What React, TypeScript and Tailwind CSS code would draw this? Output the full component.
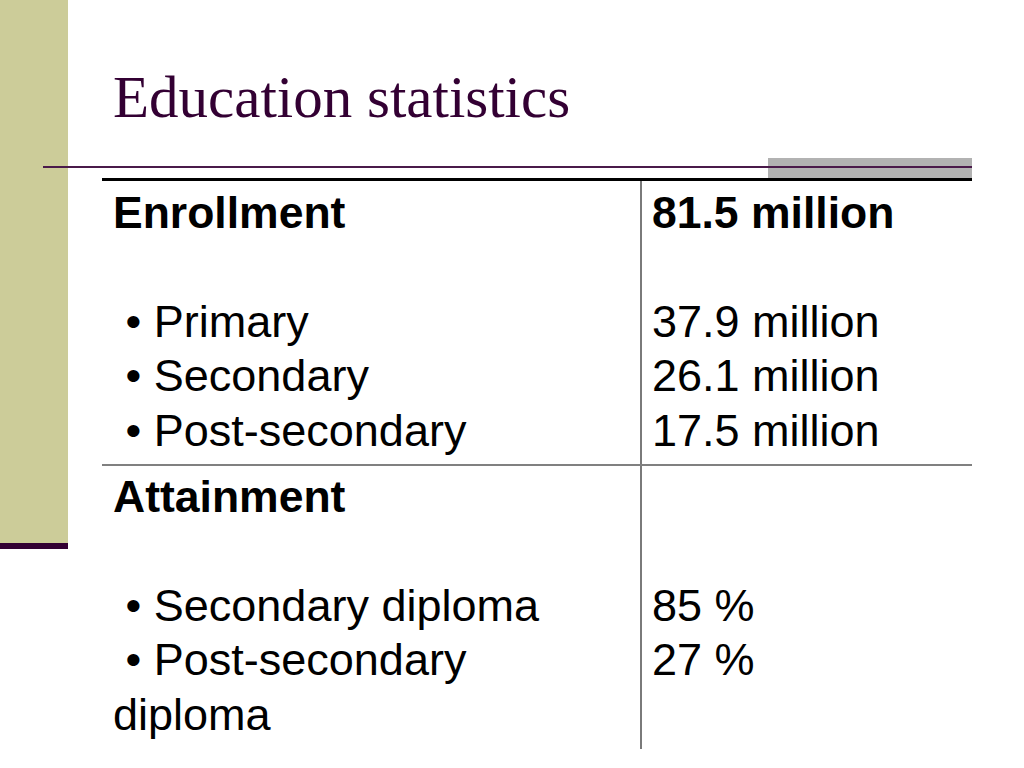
const sans = { fontFamily: '"Liberation Sans", Arial, sans-serif' };

const rows = [
  {
    left: [
      { text: "Enrollment", bold: true },
      { text: "" },
      { text: " • Primary" },
      { text: " • Secondary" },
      { text: " • Post-secondary" },
    ],
    right: [
      { text: "81.5 million", bold: true },
      { text: "" },
      { text: "37.9 million" },
      { text: "26.1 million" },
      { text: "17.5 million" },
    ],
  },
  {
    left: [
      { text: "Attainment", bold: true },
      { text: "" },
      { text: " • Secondary diploma" },
      { text: " • Post-secondary" },
      { text: "diploma" },
    ],
    right: [
      { text: "" },
      { text: "" },
      { text: "85 %" },
      { text: "27 %" },
      { text: "" },
    ],
  },
];

type Line = { text: string; bold?: boolean };

function Lines({ lines }: { lines: Line[] }) {
  return (
    <>
      {lines.map((l, i) => (
        <div
          key={i}
          className={`h-[54.5px] whitespace-pre leading-[54.5px] text-black ${l.bold ? "text-[44.5px] font-bold" : "text-[45px] font-normal"}`}
        >
          {l.text}
        </div>
      ))}
    </>
  );
}

export default function App() {
  return (
    <div className="flex h-[768px] w-[1024px] overflow-hidden bg-white">
      {/* side band */}
      <div className="flex w-[68px] shrink-0 flex-col">
        <div className="h-[543px] bg-[#cccc99]" />
        <div className="h-[6px] bg-[#330033]" />
      </div>

      <div className="flex flex-1 flex-col">
        <h1
          className="mb-[31px] ml-[45px] pt-[68px] text-[59px] leading-[59px] font-normal text-[#330033]"
          style={{ fontFamily: '"Liberation Serif", "Times New Roman", serif' }}
        >
          Education statistics
        </h1>

        {/* rule with grey tab */}
        <div className="relative -ml-[25px] flex h-[20px] w-[929px] justify-end">
          <div className="h-[20px] w-[204px] bg-[#b2b2b2]" />
          <div className="absolute left-0 right-0 top-[8px] h-[2px] bg-[#4a1a4a]" />
        </div>

        {/* table */}
        <div className="ml-[34px] w-[870px] border-t-[3px] border-black" style={sans}>
          {rows.map((r, i) => (
            <div
              key={i}
              className={`grid grid-cols-[540px_1fr] ${i === 0 ? "border-b-2 border-[#808080]" : ""}`}
            >
              <div
                className={`border-r-2 border-[#7a7a7a] pl-[11px] ${i === 0 ? "pt-[4.5px] pb-[6px]" : "pt-[3.5px] pb-[7px]"}`}
              >
                <Lines lines={r.left} />
              </div>
              <div className={`pl-[10px] ${i === 0 ? "pt-[4.5px] pb-[6px]" : "pt-[3.5px] pb-[7px]"}`}>
                <Lines lines={r.right} />
              </div>
            </div>
          ))}
        </div>
      </div>
    </div>
  );
}
